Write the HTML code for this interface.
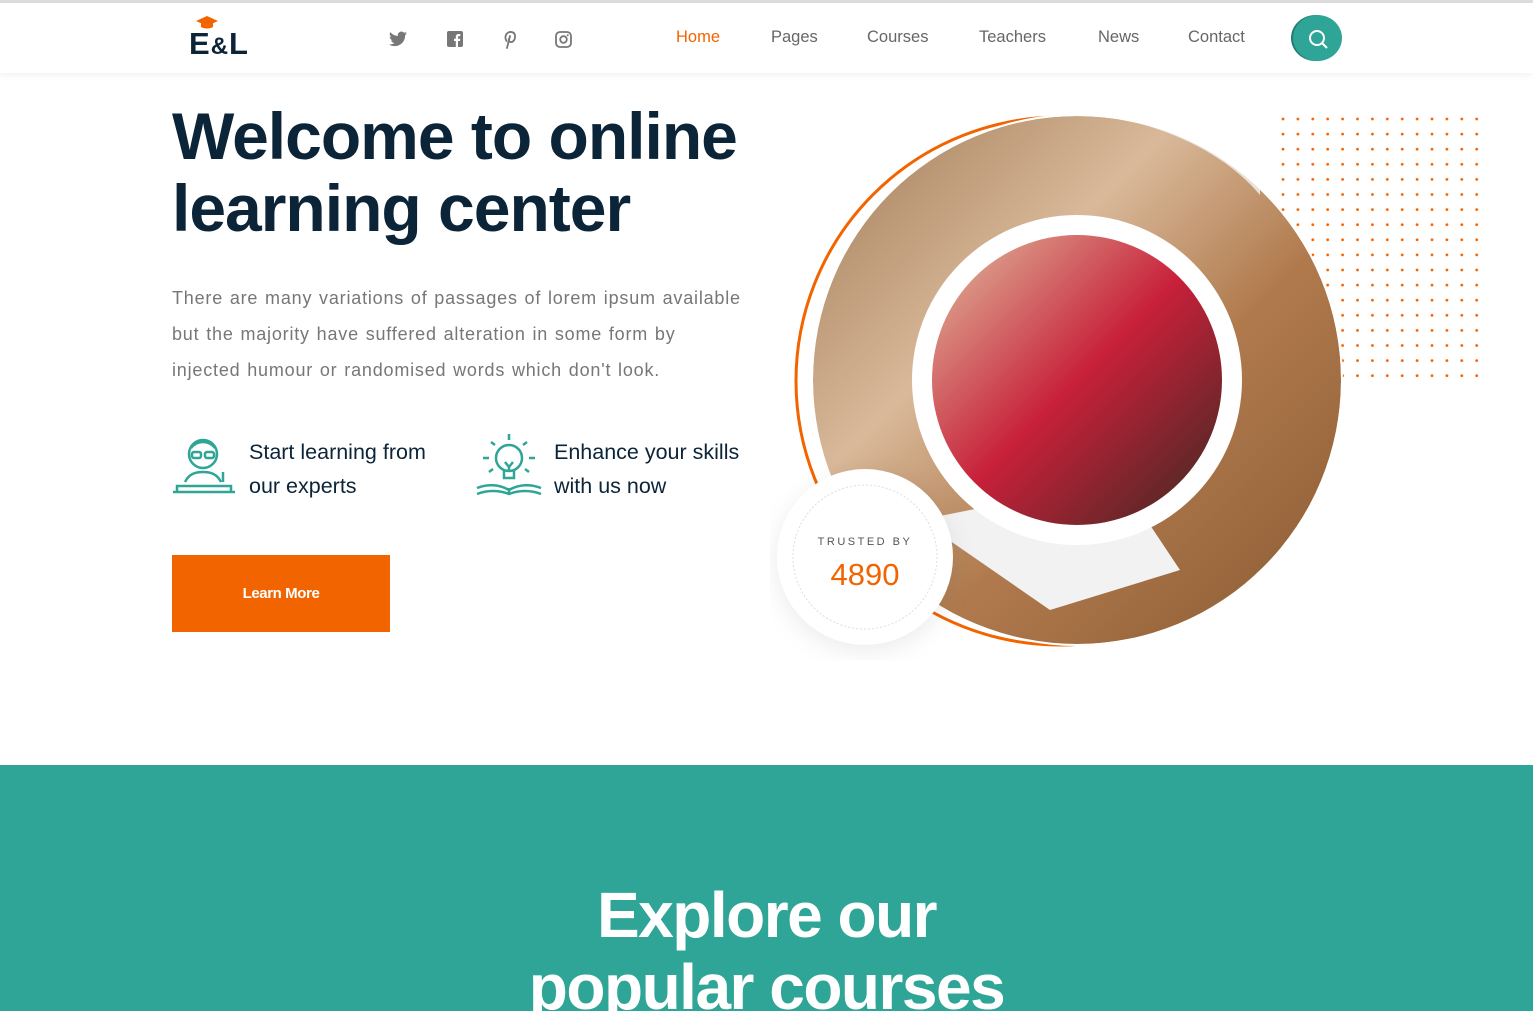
<!DOCTYPE html>
<html><head><meta charset="utf-8"><style>
*{margin:0;padding:0;box-sizing:border-box}
body{width:1533px;height:1011px;overflow:hidden;background:#fff;font-family:"Liberation Sans",sans-serif;position:relative}
.top{position:absolute;top:0;left:0;width:1533px;height:3px;background:#ddd}
.nav{position:absolute;top:3px;left:0;width:1533px;height:70px;background:#fff;box-shadow:0 2px 6px rgba(0,0,0,.06)}
.nav a{position:absolute;top:25px;font-size:16.5px;color:#666;text-decoration:none}
.abs{position:absolute}
h1{position:absolute;left:172px;top:100px;font-size:66px;line-height:72px;color:#0c2438;font-weight:bold;letter-spacing:-1px}
.p{position:absolute;left:172px;top:280px;width:575px;font-size:18px;line-height:36px;color:#777;letter-spacing:.8px;word-spacing:1px}
.feat{position:absolute;font-size:21.5px;line-height:34px;color:#0c2438}
.btn{position:absolute;left:172px;top:555px;width:218px;height:77px;background:#f26400;color:#fff;font-weight:bold;font-size:15px;text-align:center;line-height:77px;letter-spacing:-.4px}
.teal{position:absolute;left:0;top:765px;width:1533px;height:246px;background:#2ea596;overflow:hidden}
.teal h2{position:absolute;left:0;width:1533px;text-align:center;color:#fff;font-size:64px;line-height:72px;top:114px;font-weight:bold;letter-spacing:-1.5px}
</style></head><body>
<div class="top"></div>
<div class="nav">
 <svg class="abs" style="left:196px;top:13px" width="22" height="14" viewBox="0 0 22 14"><path d="M11 0L22 5 11 10 0 5Z" fill="#f26400"/><path d="M5 7v4c3 2 9 2 12 0V7l-6 3z" fill="#f26400"/></svg>
 <div class="abs" style="left:189px;top:23px;font-size:31px;font-weight:bold;color:#0c2438;letter-spacing:1px">E<span style="font-size:24px">&amp;</span>L</div>
 <svg class="abs" style="left:389px;top:28px" width="18" height="16" viewBox="0 0 24 20"><path d="M24 2.4a10 10 0 0 1-2.8.8A5 5 0 0 0 23.3.5a10 10 0 0 1-3.1 1.2A4.9 4.9 0 0 0 11.8 6 14 14 0 0 1 1.7.9a4.9 4.9 0 0 0 1.5 6.6A5 5 0 0 1 1 6.9a4.9 4.9 0 0 0 3.9 4.9 5 5 0 0 1-2.2.1 4.9 4.9 0 0 0 4.6 3.4A9.9 9.9 0 0 1 0 17.3 14 14 0 0 0 7.5 19.5c9 0 14-7.5 14-14v-.6A10 10 0 0 0 24 2.4z" fill="#777"/></svg>
 <svg class="abs" style="left:447px;top:28px" width="16" height="16" viewBox="0 0 16 16"><rect width="16" height="16" rx="2" fill="#777"/><path d="M11 16V10h2l.3-2.3H11V6.3c0-.7.2-1.1 1.1-1.1h1.2V3.1A16 16 0 0 0 11.6 3C10 3 8.8 4 8.8 5.8v1.9H7V10h1.8v6z" fill="#fff"/></svg>
 <svg class="abs" style="left:502px;top:27px" width="15" height="19" viewBox="0 0 15 19"><path d="M5 18L8 6M4.5 11C3 9 3 5.5 5 3.5 7.5 1 12.5 1.5 13 5.5c.5 4-2 7-4.5 6.5-1.5-.3-2-1.5-1.7-3" fill="none" stroke="#777" stroke-width="1.8" stroke-linecap="round"/></svg>
 <svg class="abs" style="left:555px;top:28px" width="17" height="17" viewBox="0 0 17 17"><rect x="1" y="1" width="15" height="15" rx="4" fill="none" stroke="#777" stroke-width="1.8"/><circle cx="8.5" cy="8.5" r="3.3" fill="none" stroke="#777" stroke-width="1.8"/><circle cx="12.7" cy="4.3" r="1" fill="#777"/></svg>
 <a style="left:676px;color:#f26400">Home</a>
 <a style="left:771px">Pages</a>
 <a style="left:867px">Courses</a>
 <a style="left:979px">Teachers</a>
 <a style="left:1098px">News</a>
 <a style="left:1188px">Contact</a>
 <div class="abs" style="left:1293px;top:12px;width:49px;height:46px;border-radius:50%;background:#2ea596;box-shadow:-2px 0 0 #1f7d71"></div>
 <svg class="abs" style="left:1308px;top:26px" width="20" height="20" viewBox="0 0 20 20"><circle cx="9" cy="9" r="7" fill="none" stroke="#fff" stroke-width="2"/><path d="M14 14l5 5" stroke="#fff" stroke-width="2"/></svg>
</div>
<h1>Welcome to online<br>learning center</h1>
<div class="p">There are many variations of passages of lorem ipsum available<br>but the majority have suffered alteration in some form by<br>injected humour or randomised words which don't look.</div>
<svg class="abs" style="left:171px;top:432px" width="66" height="66" viewBox="0 0 66 66" fill="none" stroke="#2ea596" stroke-width="2.5"><circle cx="32" cy="22" r="14"/><path d="M20 16c6-8 18-8 24 0"/><rect x="21" y="20" width="9" height="6" rx="2"/><rect x="34" y="20" width="9" height="6" rx="2"/><path d="M14 50c4-8 10-10 18-10s14 2 18 10M2 60h62M6 60v-6h54v6M52 40v10"/></svg>
<div class="feat" style="left:249px;top:435px">Start learning from<br>our experts</div>
<svg class="abs" style="left:475px;top:432px" width="68" height="66" viewBox="0 0 68 66" fill="none" stroke="#2ea596" stroke-width="2.5"><circle cx="34" cy="26" r="13"/><path d="M29 38v8h10v-8M30 30l4 5 4-5M34 35v3M34 2v6M16 10l4 3M52 10l-4 3M8 26h6M54 26h6M14 40l4-3M54 40l-4-3M2 56c10-4 22-4 32 2 10-6 22-6 32-2M2 62c10-4 22-4 32 0 10-4 22-4 32 0M34 56v6"/></svg>
<div class="feat" style="left:554px;top:435px">Enhance your skills<br>with us now</div>
<div class="btn">Learn More</div>
<svg class="abs" style="left:1276px;top:112px" width="210" height="275">
<defs><pattern id="d" width="14.9" height="15.1" patternUnits="userSpaceOnUse"><circle cx="7" cy="7" r="1.4" fill="#f26400"/></pattern></defs>
<rect width="210" height="275" fill="url(#d)"/></svg>
<svg class="abs" style="left:770px;top:100px" width="600" height="560">
<defs><linearGradient id="g" x1="0" y1="0" x2="1" y2="1"><stop offset="0" stop-color="#a07a55"/><stop offset=".35" stop-color="#d9b99a"/><stop offset=".6" stop-color="#b07a4d"/><stop offset="1" stop-color="#8a5a33"/></linearGradient>
<linearGradient id="g2" x1="0" y1="0" x2="1" y2="1"><stop offset="0" stop-color="#e0c0a0"/><stop offset=".5" stop-color="#c8203a"/><stop offset="1" stop-color="#3a2a20"/></linearGradient>
<clipPath id="c"><circle cx="307" cy="280" r="264"/></clipPath></defs>
<circle cx="290" cy="281" r="264" fill="none" stroke="#f26400" stroke-width="3"/>
<circle cx="307" cy="280" r="266" fill="#fff"/>
<g clip-path="url(#c)">
<circle cx="307" cy="280" r="264" fill="url(#g)"/>
<path d="M260 15c80-10 180 20 230 80v-60c-60-40-140-50-230-20z" fill="#e8e2da"/>
<path d="M150 420l130 90 130-40-60-90z" fill="#f2f2f2"/>
</g>
<circle cx="307" cy="280" r="165" fill="#fff"/>
<circle cx="307" cy="280" r="145" fill="url(#g2)"/>
<circle cx="95" cy="457" r="88" fill="#fff" style="filter:drop-shadow(0 6px 12px rgba(0,0,0,.08))"/>
<circle cx="95" cy="457" r="72" fill="none" stroke="#ddd" stroke-dasharray="2 2"/>
<text x="95" y="445" text-anchor="middle" font-family="Liberation Sans" font-size="11" fill="#555" letter-spacing="2.5">TRUSTED BY</text>
<text x="95" y="485" text-anchor="middle" font-family="Liberation Sans" font-size="31" fill="#f26400">4890</text>
</svg>
<div class="teal"><h2>Explore our<br>popular courses</h2></div>
</body></html>
